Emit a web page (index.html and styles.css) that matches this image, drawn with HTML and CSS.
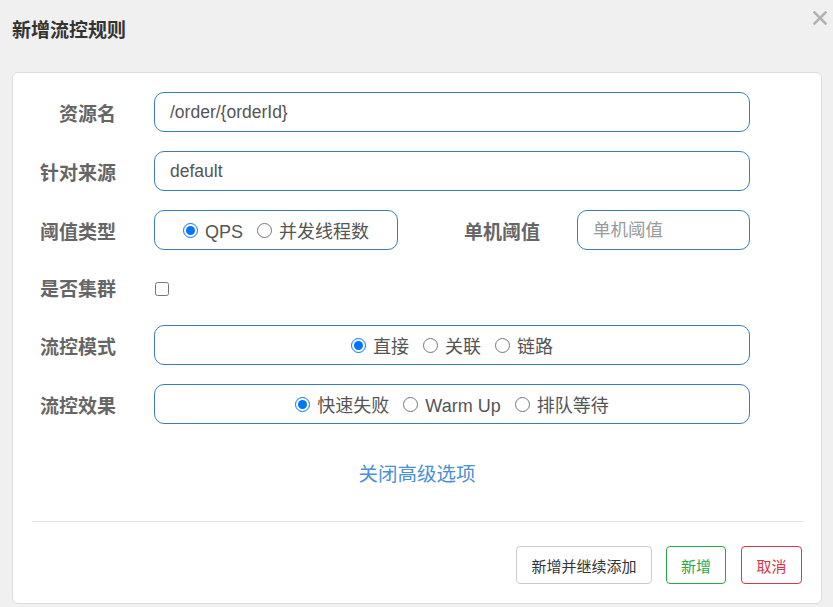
FILE: index.html
```html
<!DOCTYPE html>
<html lang="zh-CN">
<head>
<meta charset="utf-8">
<title>新增流控规则</title>
<link rel="stylesheet" href="styles.css">
</head>
<body>
<div class="dialog">
  <div class="dlg-head">
    <h1 class="title">新增流控规则</h1>
    <button class="close" type="button" aria-label="关闭">
      <svg width="14" height="14" viewBox="0 0 14 14"><path d="M1.5 1.5 L12.5 12.5 M12.5 1.5 L1.5 12.5" stroke="#b3b3b3" stroke-width="2.6" stroke-linecap="square" fill="none"/></svg>
    </button>
  </div>
  <div class="card">
    <form class="form">
      <div class="row">
        <label class="lbl">资源名</label>
        <input class="field wide" type="text" value="/order/{orderId}">
      </div>
      <div class="row">
        <label class="lbl">针对来源</label>
        <input class="field wide" type="text" value="default">
      </div>
      <div class="row">
        <label class="lbl">阈值类型</label>
        <div class="group short">
          <label class="opt"><input type="radio" name="grade" checked> QPS</label>
          <label class="opt"><input type="radio" name="grade"> 并发线程数</label>
        </div>
        <label class="lbl lbl-mid">单机阈值</label>
        <input class="field small" type="text" placeholder="单机阈值">
      </div>
      <div class="row row-check">
        <label class="lbl">是否集群</label>
        <input class="check" type="checkbox">
      </div>
      <div class="row">
        <label class="lbl">流控模式</label>
        <div class="group wide">
          <label class="opt"><input type="radio" name="mode" checked> 直接</label>
          <label class="opt"><input type="radio" name="mode"> 关联</label>
          <label class="opt"><input type="radio" name="mode"> 链路</label>
        </div>
      </div>
      <div class="row">
        <label class="lbl">流控效果</label>
        <div class="group wide">
          <label class="opt"><input type="radio" name="effect" checked> 快速失败</label>
          <label class="opt"><input type="radio" name="effect"> Warm Up</label>
          <label class="opt"><input type="radio" name="effect"> 排队等待</label>
        </div>
      </div>
    </form>
    <div class="more"><a href="#" class="more-link">关闭高级选项</a></div>
    <div class="divider"></div>
    <div class="footer">
      <button type="button" class="btn btn-default">新增并继续添加</button>
      <button type="button" class="btn btn-success">新增</button>
      <button type="button" class="btn btn-danger">取消</button>
    </div>
  </div>
</div>
</body>
</html>
```

FILE: styles.css
```css
html, body {
  margin: 0;
  padding: 0;
  background: #f0f0f0;
}
body {
  font-family: "Liberation Sans", "Noto Sans CJK SC", sans-serif;
  color: #555;
  width: 833px;
  height: 607px;
  overflow: hidden;
}
.dialog {
  padding: 0 0 0 12px;
}
.dlg-head {
  display: flex;
  justify-content: space-between;
  align-items: flex-start;
  height: 72px;
}
.title {
  margin: 19px 0 0 0;
  font-size: 19px;
  line-height: 24px;
  font-weight: bold;
  color: #333;
}
.close {
  margin: 11px 6px 0 0;
  padding: 0;
  border: 0;
  background: transparent;
  width: 14px;
  height: 14px;
  display: flex;
}
.card {
  width: 808px;
  background: #fff;
  border: 1px solid #dcdcdc;
  border-radius: 6px;
  height: 530px;
  box-sizing: content-box;
}
.form {
  display: flex;
  flex-direction: column;
  gap: 19px;
  padding-top: 19px;
}
.row {
  display: flex;
  align-items: center;
  height: 40px;
}
.row-check {
  height: 37px;
}
.lbl {
  width: 103px;
  margin-right: 38px;
  padding-top: 5px;
  text-align: right;
  font-size: 19px;
  font-weight: bold;
  color: #666;
  line-height: 24px;
  flex: none;
}
.lbl-mid {
  width: 142px;
  margin-right: 37px;
}
.field {
  box-sizing: border-box;
  height: 40px;
  border: 1px solid #3a7cbf;
  border-radius: 10px;
  padding: 0 15px;
  font-family: "Liberation Sans", "Noto Sans CJK SC", sans-serif;
  font-size: 17.5px;
  color: #555;
  background: #fff;
  outline: none;
}
.field::placeholder {
  color: #999;
}
.field.wide, .group.wide {
  width: 596px;
}
.field.small {
  width: 173px;
}
.group {
  box-sizing: border-box;
  height: 40px;
  border: 1px solid #3a7cbf;
  border-radius: 10px;
  display: flex;
  justify-content: center;
  align-items: center;
  gap: 14px;
  padding-top: 3px;
}
.group.short {
  width: 244px;
}
.opt {
  display: flex;
  align-items: center;
  gap: 7px;
  font-size: 18px;
  color: #555;
  line-height: 22px;
  white-space: nowrap;
}
.opt input {
  margin: 0 0 2px 0;
  width: 15px;
  height: 15px;
}
.check {
  margin: 2px 0 0 1px;
  width: 14px;
  height: 14px;
}
.more {
  text-align: center;
  margin-top: 38px;
  line-height: 24px;
  height: 24px;
}
.more-link {
  font-size: 19.5px;
  color: #4a8fd7;
  text-decoration: none;
}
.divider {
  margin: 35px 17px 0 19px;
  height: 1px;
  background: #e3e3e3;
}
.footer {
  display: flex;
  justify-content: flex-end;
  gap: 14px;
  padding: 24px 19px 0 0;
}
.btn {
  height: 38px;
  box-sizing: border-box;
  background: #fff;
  border: 1px solid #ccc;
  border-radius: 4px;
  font-family: "Liberation Sans", "Noto Sans CJK SC", sans-serif;
  font-size: 15px;
  padding: 0;
  color: #333;
}
.btn-success {
  border-color: #28a745;
  color: #28a745;
  width: 60px;
}
.btn-danger {
  border-color: #dc3545;
  color: #dc3545;
  width: 61px;
  margin-left: 1px;
}
.btn-default {
  width: 136px;
}
```
